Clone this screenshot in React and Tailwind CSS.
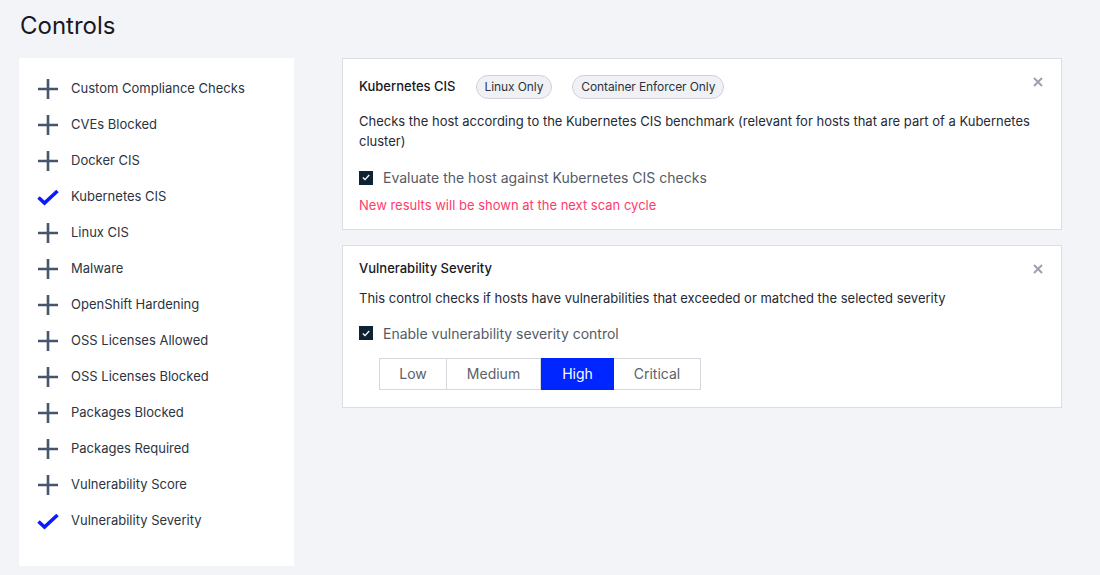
import React from 'react';

const controls = [
  { name: 'Custom Compliance Checks', on: false },
  { name: 'CVEs Blocked', on: false },
  { name: 'Docker CIS', on: false },
  { name: 'Kubernetes CIS', on: true },
  { name: 'Linux CIS', on: false },
  { name: 'Malware', on: false },
  { name: 'OpenShift Hardening', on: false },
  { name: 'OSS Licenses Allowed', on: false },
  { name: 'OSS Licenses Blocked', on: false },
  { name: 'Packages Blocked', on: false },
  { name: 'Packages Required', on: false },
  { name: 'Vulnerability Score', on: false },
  { name: 'Vulnerability Severity', on: true },
];

const PlusIcon = () => (
  <svg width="22" height="22" viewBox="0 0 22 22">
    <path d="M11 1v20M1 11h20" stroke="#45566d" strokeWidth="2.6" />
  </svg>
);

const CheckIcon = () => (
  <svg width="22" height="22" viewBox="0 0 22 22">
    <path d="M1.5 11.5l6 5.5L20.5 5" stroke="#0a1bff" strokeWidth="3.6" fill="none" />
  </svg>
);

const CloseIcon = () => (
  <svg width="10" height="10" viewBox="0 0 10 10">
    <path d="M1 1l8 8M9 1l-8 8" stroke="#9ca1aa" strokeWidth="2" />
  </svg>
);

const Checkbox = () => (
  <span className="w-[14px] h-[14px] bg-[#0e2433] flex items-center justify-center shrink-0">
    <svg width="8" height="7" viewBox="0 0 8 7">
      <path d="M0.8 3.6l2.2 2L7.2 1" stroke="#ffffff" strokeWidth="1.3" fill="none" />
    </svg>
  </span>
);

const Pill = ({ children }) => (
  <span className="h-[24px] px-[8px] rounded-full border border-[#cfd2d8] bg-[#f0f1f5] text-[12px] tracking-[-0.1px] text-[#2b3340] flex items-center">
    {children}
  </span>
);

const Card = ({ children }) => (
  <div className="relative bg-white border border-[#dcdee3] pl-[16px] pr-[20px]">
    <button className="absolute right-[18px] top-[18px]">
      <CloseIcon />
    </button>
    {children}
  </div>
);

export default function App() {
  const levels = [
    { name: 'Low', w: 'w-[68px]' },
    { name: 'Medium', w: 'w-[94px]' },
    { name: 'High', w: 'w-[73px]' },
    { name: 'Critical', w: 'w-[87px]' },
  ];

  return (
    <div className="w-[1100px] h-[575px] bg-[#f3f4f8] font-['Inter',sans-serif] text-[#1f2430] overflow-hidden">
      <h1 className="text-[24px] leading-[30px] pt-[11px] pl-[20px] text-[#16191f]">Controls</h1>
      <div className="flex gap-[48px] pl-[19px] pt-[17px]">
        <div className="w-[275px] h-[508px] bg-white pt-[13px] pl-[18px]">
          {controls.map((c) => (
            <div key={c.name} className="flex items-center h-[36px] gap-[12px]">
              <span className="w-[22px] flex items-center">{c.on ? <CheckIcon /> : <PlusIcon />}</span>
              <span className="text-[13px] text-[#2c3442]">{c.name}</span>
            </div>
          ))}
        </div>

        <div className="w-[720px] flex flex-col gap-[15px]">
          <Card>
            <div className="flex items-center gap-[20px] pt-[16px]">
              <span className="text-[13px] font-medium text-[#16191f]">Kubernetes CIS</span>
              <Pill>Linux Only</Pill>
              <Pill>Container Enforcer Only</Pill>
            </div>
            <p className="text-[13px] leading-[20px] text-[#252a35] mt-[12px]">
              Checks the host according to the Kubernetes CIS benchmark (relevant for hosts that are part of a Kubernetes cluster)
            </p>
            <label className="flex items-center gap-[10px] mt-[16px]">
              <Checkbox />
              <span className="text-[14px] text-[#545b66]">Evaluate the host against Kubernetes CIS checks</span>
            </label>
            <p className="text-[13px] text-[#ff3b6b] mt-[8px] pb-[13px]">New results will be shown at the next scan cycle</p>
          </Card>

          <Card>
            <div className="text-[13px] font-medium text-[#16191f] pt-[13px]">Vulnerability Severity</div>
            <p className="text-[13px] text-[#252a35] mt-[11px]">
              This control checks if hosts have vulnerabilities that exceeded or matched the selected severity
            </p>
            <label className="flex items-center gap-[10px] mt-[14px]">
              <Checkbox />
              <span className="text-[14px] text-[#545b66]">Enable vulnerability severity control</span>
            </label>
            <div className="flex ml-[20px] mt-[14px] mb-[17px]">
              {levels.map((l, i) => (
                <button
                  key={l.name}
                  className={
                    l.name === 'High'
                      ? `${l.w} h-[32px] bg-[#0026ff] text-white text-[14px] border border-[#0026ff]`
                      : `${l.w} h-[32px] bg-white text-[#5b616b] text-[14px] border border-[#d6d8dd] ${i > 0 ? 'border-l-0' : ''}`
                  }
                >
                  {l.name}
                </button>
              ))}
            </div>
          </Card>
        </div>
      </div>
    </div>
  );
}
